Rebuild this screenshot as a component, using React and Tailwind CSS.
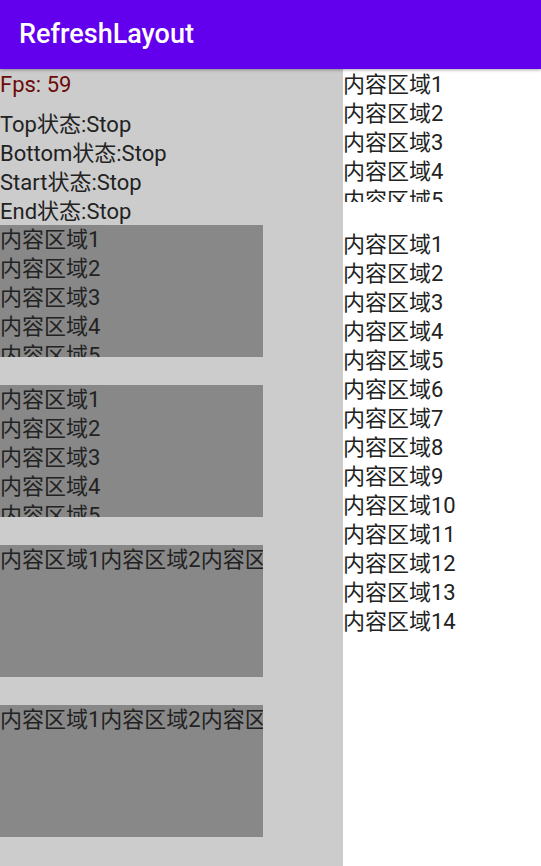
import React from 'react';

const font = { fontFamily: 'Roboto, "Noto Sans CJK SC", sans-serif' };

const items = (n) => Array.from({ length: n }, (_, i) => `内容区域${i + 1}`);

function ListBox({ count = 5, className = '' }) {
  return (
    <div className={`relative h-[132px] overflow-hidden ${className}`}>
      {items(count).map((t) => (
        <div key={t} className="h-[29px] leading-[29px] whitespace-nowrap">{t}</div>
      ))}
    </div>
  );
}

function RowBox() {
  return (
    <div className="relative h-[132px] w-[263px] overflow-hidden bg-[#888888]">
      <div className="leading-[29px] whitespace-nowrap">{items(5).join('')}</div>
    </div>
  );
}

export default function App() {
  const states = ['Top', 'Bottom', 'Start', 'End'];

  return (
    <div className="w-[541px] h-[866px] overflow-hidden bg-white text-[22px] text-[#222222]" style={font}>
      <header className="relative z-20 h-[69px] bg-[#6200ee] flex items-center px-[19px] shadow-[0_1px_3px_rgba(0,0,0,0.35)]">
        <h1 className="text-white text-[27px] font-medium">RefreshLayout</h1>
      </header>

      <div className="flex h-[797px]">
        <div className="w-[343px] bg-[#cccccc] pt-[1px]">
          <div className="h-[40px] leading-[29px] text-[#6d0a0a]">Fps: 59</div>
          <div className="h-[115px]">
            {states.map((s) => (
              <div key={s} className="h-[29px] leading-[29px] whitespace-nowrap">{s}状态:Stop</div>
            ))}
          </div>
          <div className="flex flex-col gap-[28px]">
            <ListBox className="w-[263px] bg-[#888888]" />
            <ListBox className="w-[263px] bg-[#888888]" />
            <RowBox />
            <RowBox />
          </div>
        </div>

        <div className="flex-1 pt-[1px] flex flex-col gap-[28px]">
          <ListBox />
          <div>
            {items(14).map((t) => (
              <div key={t} className="h-[29px] leading-[29px] whitespace-nowrap">{t}</div>
            ))}
          </div>
        </div>
      </div>
    </div>
  );
}
